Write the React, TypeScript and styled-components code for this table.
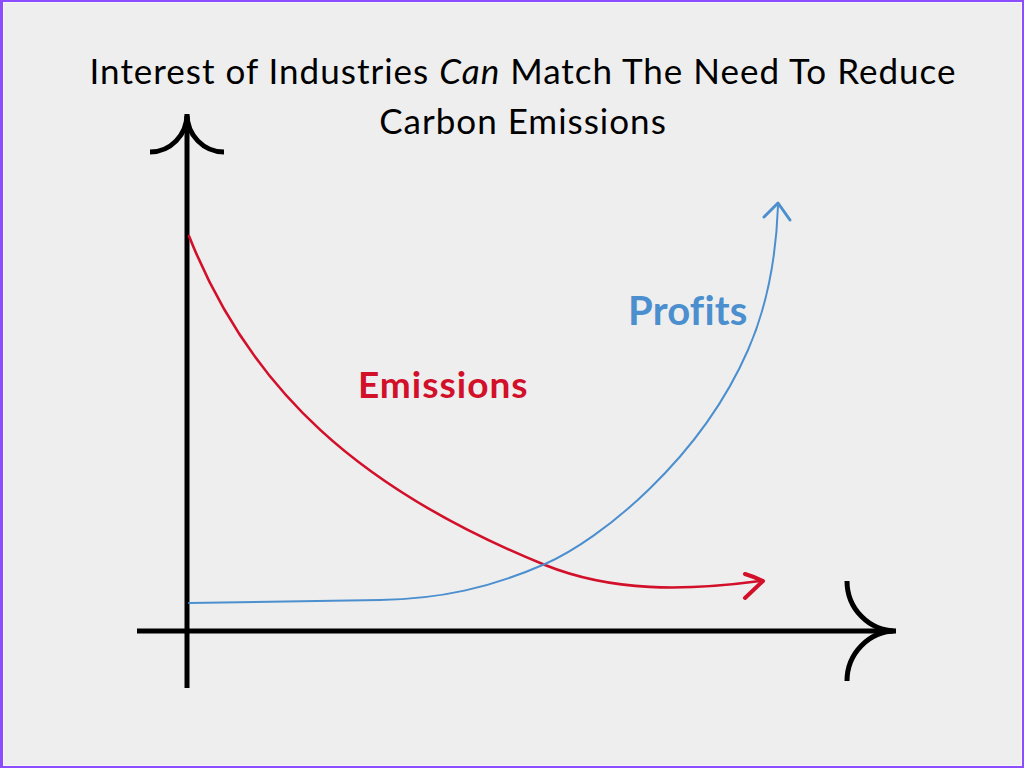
import { ReactElement } from 'react';
import styled, { createGlobalStyle } from 'styled-components';

const GlobalStyle = createGlobalStyle`
  html, body {
    margin: 0;
    padding: 0;
    background: #eeeeee;
  }
`;

const Frame = styled.main`
  box-sizing: border-box;
  width: 1024px;
  height: 768px;
  display: grid;
  grid-template: 1fr / 1fr;
  background: #eeeeee;
  border: 2px solid #8b4dff;
  border-left-width: 3px;
  box-shadow: inset 0 0 0 1px #f6f6f6;
  overflow: hidden;
`;

const Title = styled.h1`
  grid-area: 1 / 1;
  align-self: start;
  margin: 0;
  padding: 43px 0 0 21px;
  position: relative;
  z-index: 1;
  text-align: center;
  font-family: Lato, 'Liberation Sans', sans-serif;
  font-weight: 400;
  font-size: 35px;
  line-height: 50px;
  letter-spacing: 1px;
  color: #000;
  em {
    font-style: italic;
  }
`;

const Chart = styled.section`
  grid-area: 1 / 1;
  position: relative;
  svg {
    display: block;
    width: 100%;
    height: 100%;
  }
`;

const Label = styled.span<{ $color: string; $size: number; $x: number; $y: number; $track: number }>`
  position: absolute;
  left: ${({ $x }) => $x}px;
  top: ${({ $y }) => $y}px;
  font-family: Lato, 'Liberation Sans', sans-serif;
  font-weight: 700;
  font-size: ${({ $size }) => $size}px;
  line-height: 1;
  letter-spacing: ${({ $track }) => $track}px;
  color: ${({ $color }) => $color};
`;

const RED = '#d2102a';
const BLUE = '#4b8fcf';

/** page coordinates: viewBox starts at the frame's inner corner */
const Axes = (): ReactElement => (
  <g fill="none" stroke="#000" strokeWidth={5}>
    <path d="M187 688 L187 116" />
    <path d="M150 152 A37 38 0 0 0 187 114 A37 38 0 0 0 224 152" />
    <path d="M137 631 L893 631" />
    <path d="M847 581 A49 50 0 0 0 896 631 A49 50 0 0 0 847 681" />
  </g>
);

const Curves = (): ReactElement => (
  <g fill="none" strokeLinecap="round" strokeLinejoin="round">
    <path
      d="M189 236 C250 390 360 490 545 565 C612 592 685 591 760 581"
      stroke={RED}
      strokeWidth={2.6}
    />
    <path d="M745 574 Q755 577 763 581 L745 598" stroke={RED} strokeWidth={4} />
    <path
      d="M189 603 C280 602 340 601 380 600 C440 599 490 588 545 564 C600 540 700 460 748 350 C766 309 776 260 778 206"
      stroke={BLUE}
      strokeWidth={2}
    />
    <path d="M764 217 L778 203 L790 220" stroke={BLUE} strokeWidth={3} />
  </g>
);

export default function App(): ReactElement {
  return (
    <>
      <GlobalStyle />
      <Frame>
        <Title>
          Interest of Industries <em>Can</em> Match The Need To Reduce
          <br />
          Carbon Emissions
        </Title>
        <Chart>
          <svg viewBox="3 2 1019 764" preserveAspectRatio="none">
            <Axes />
            <Curves />
          </svg>
          <Label $color={BLUE} $size={40} $x={625} $y={288} $track={0.2}>
            Profits
          </Label>
          <Label $color={RED} $size={37} $x={355} $y={363} $track={1}>
            Emissions
          </Label>
        </Chart>
      </Frame>
    </>
  );
}
